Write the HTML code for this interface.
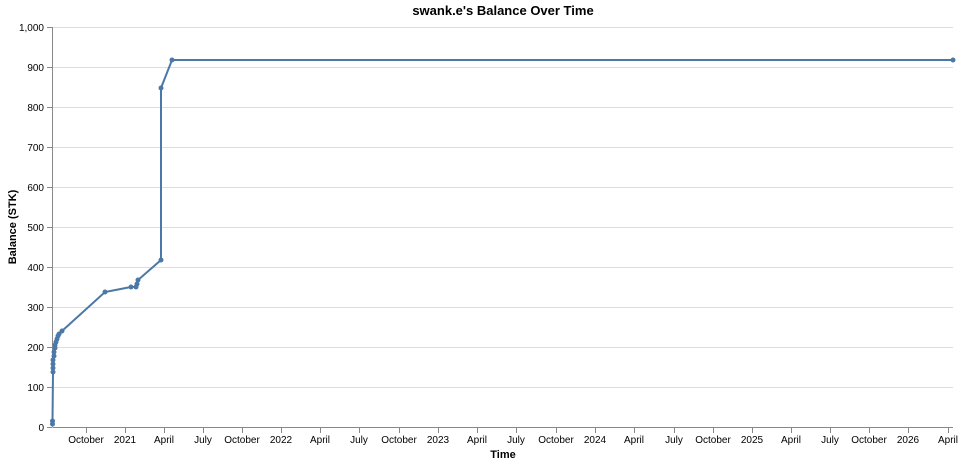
<!DOCTYPE html>
<html><head><style>body{margin:0;background:#fff}svg{display:block}text{font-family:"Liberation Sans",sans-serif;fill:#000}</style></head><body>
<svg width="963" height="464" xmlns="http://www.w3.org/2000/svg">
<g stroke="#ddd" stroke-width="1">
<line x1="52.5" x2="953" y1="27.5" y2="27.5"/><line x1="52.5" x2="953" y1="67.5" y2="67.5"/><line x1="52.5" x2="953" y1="107.5" y2="107.5"/><line x1="52.5" x2="953" y1="147.5" y2="147.5"/><line x1="52.5" x2="953" y1="187.5" y2="187.5"/><line x1="52.5" x2="953" y1="227.5" y2="227.5"/><line x1="52.5" x2="953" y1="267.5" y2="267.5"/><line x1="52.5" x2="953" y1="307.5" y2="307.5"/><line x1="52.5" x2="953" y1="347.5" y2="347.5"/><line x1="52.5" x2="953" y1="387.5" y2="387.5"/>
</g>
<g stroke="#888" stroke-width="1">
<line x1="52.5" x2="52.5" y1="27" y2="427"/><line x1="52.5" x2="953" y1="427.5" y2="427.5"/>
<path d="M47 27.5h5M47 67.5h5M47 107.5h5M47 147.5h5M47 187.5h5M47 227.5h5M47 267.5h5M47 307.5h5M47 347.5h5M47 387.5h5M47 427.5h5"/>
<path d="M86.5 428v5M125.5 428v5M164.5 428v5M203.5 428v5M242.5 428v5M281.5 428v5M320.5 428v5M359.5 428v5M399.5 428v5M438.5 428v5M477.5 428v5M516.5 428v5M556.5 428v5M595.5 428v5M634.5 428v5M674.5 428v5M713.5 428v5M752.5 428v5M791.5 428v5M830.5 428v5M869.5 428v5M908.5 428v5M948.5 428v5"/>
</g>
<g font-size="10" text-anchor="end">
<text x="44" y="31">1,000</text><text x="44" y="71">900</text><text x="44" y="111">800</text><text x="44" y="151">700</text><text x="44" y="191">600</text><text x="44" y="231">500</text><text x="44" y="271">400</text><text x="44" y="311">300</text><text x="44" y="351">200</text><text x="44" y="391">100</text><text x="44" y="431">0</text>
</g>
<g font-size="10" text-anchor="middle">
<text x="86" y="443">October</text><text x="125" y="443">2021</text><text x="164" y="443">April</text><text x="203" y="443">July</text><text x="242" y="443">October</text><text x="281" y="443">2022</text><text x="320" y="443">April</text><text x="359" y="443">July</text><text x="399" y="443">October</text><text x="438" y="443">2023</text><text x="477" y="443">April</text><text x="516" y="443">July</text><text x="556" y="443">October</text><text x="595" y="443">2024</text><text x="634" y="443">April</text><text x="674" y="443">July</text><text x="713" y="443">October</text><text x="752" y="443">2025</text><text x="791" y="443">April</text><text x="830" y="443">July</text><text x="869" y="443">October</text><text x="908" y="443">2026</text><text x="948" y="443">April</text>
</g>
<text x="503" y="458" font-size="11" font-weight="bold" text-anchor="middle">Time</text>
<text transform="translate(16 227) rotate(-90)" font-size="11" font-weight="bold" text-anchor="middle">Balance (STK)</text>
<text x="503" y="15" font-size="13" font-weight="bold" text-anchor="middle">swank.e's Balance Over Time</text>
<polyline fill="none" stroke="#4c78a8" stroke-width="2" points="52.5,424 52.5,421 53,372 53,368 53,364 53,360 54,356 54,352 55,348 55,345 56,342 57,339 58,336 59,334 60,333 62,331 105,292 131,287 136,287 137,284 138,280 161,260 161,88 172,60 953,60"/>
<g fill="#4c78a8">
<circle cx="52.5" cy="424" r="2.5"/><circle cx="52.5" cy="421" r="2.5"/><circle cx="53" cy="372" r="2.5"/><circle cx="53" cy="368" r="2.5"/><circle cx="53" cy="364" r="2.5"/><circle cx="53" cy="360" r="2.5"/><circle cx="54" cy="356" r="2.5"/><circle cx="54" cy="352" r="2.5"/><circle cx="55" cy="348" r="2.5"/><circle cx="55" cy="345" r="2.5"/><circle cx="56" cy="342" r="2.5"/><circle cx="57" cy="339" r="2.5"/><circle cx="58" cy="336" r="2.5"/><circle cx="59" cy="334" r="2.5"/><circle cx="62" cy="331" r="2.5"/><circle cx="105" cy="292" r="2.5"/><circle cx="131" cy="287" r="2.5"/><circle cx="136" cy="287" r="2.5"/><circle cx="137" cy="284" r="2.5"/><circle cx="138" cy="280" r="2.5"/><circle cx="161" cy="260" r="2.5"/><circle cx="161" cy="88" r="2.5"/><circle cx="172" cy="60" r="2.5"/><circle cx="953" cy="60" r="2.5"/>
</g>
</svg>
</body></html>
